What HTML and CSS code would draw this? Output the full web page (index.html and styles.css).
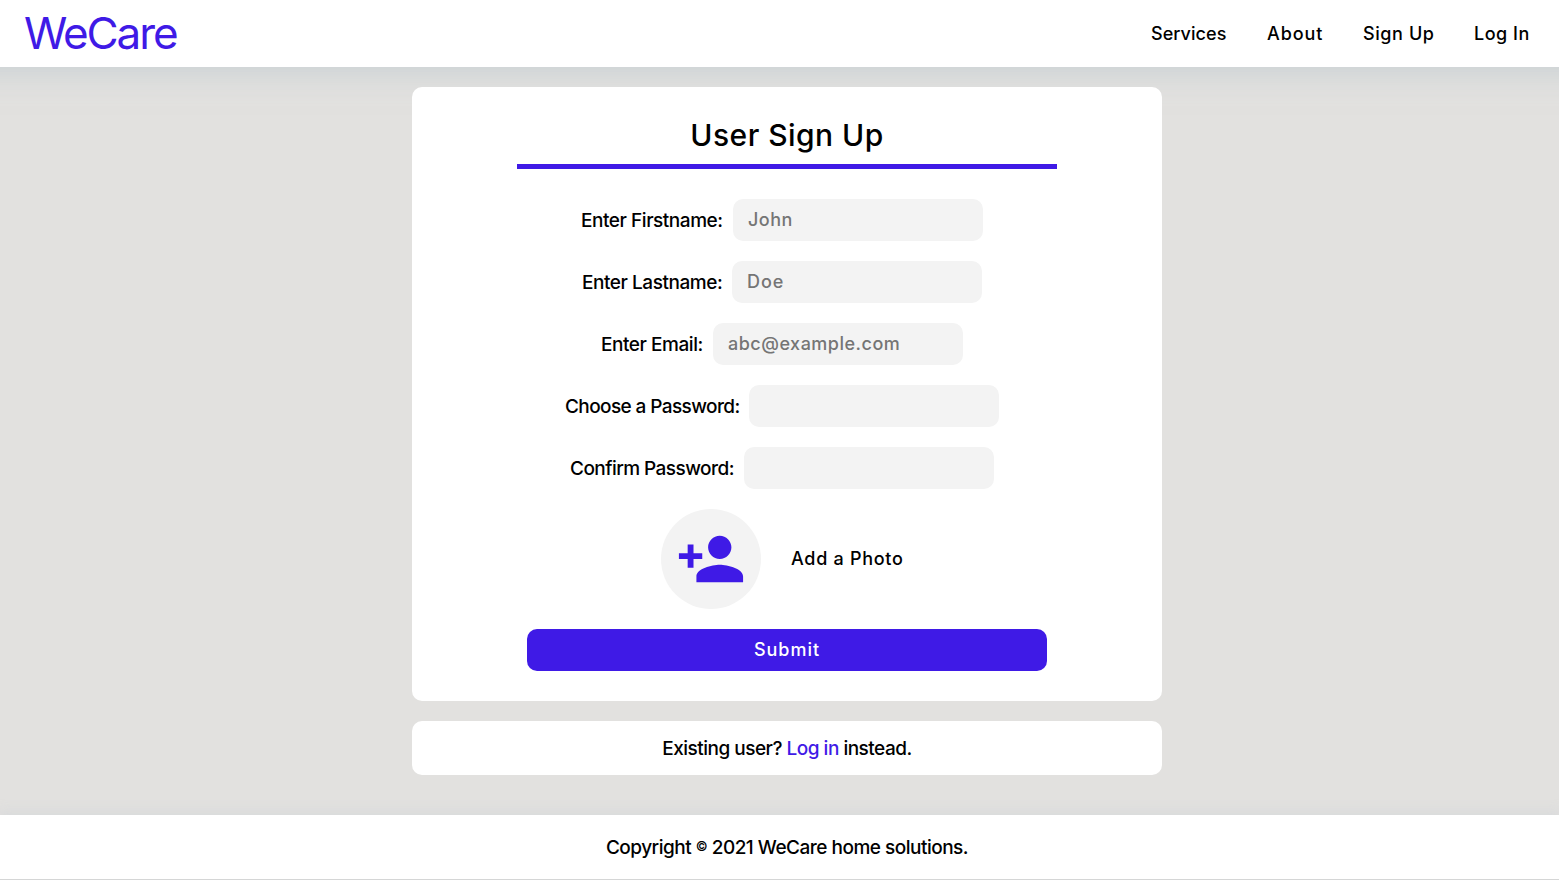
FILE: index.html
```html
<!DOCTYPE html>
<html lang="en">
<head>
<meta charset="utf-8">
<title>WeCare - Sign Up</title>
<link rel="stylesheet" href="styles.css">
</head>
<body>
<header class="header">
  <a class="logo">WeCare</a>
  <nav class="nav">
    <a class="nav-services">Services</a>
    <a class="nav-about">About</a>
    <a class="nav-signup">Sign Up</a>
    <a class="nav-login">Log In</a>
  </nav>
</header>
<main class="main">
  <form class="card">
    <h1 class="title"><span>User Sign Up</span></h1>
    <div class="row"><label class="label first" for="first">Enter Firstname:</label><input class="field" id="first" placeholder="John"></div>
    <div class="row"><label class="label last" for="last">Enter Lastname:</label><input class="field field-last" id="last" placeholder="Doe"></div>
    <div class="row"><label class="label email" for="email">Enter Email:</label><input class="field field-email" id="email" placeholder="abc@example.com"></div>
    <div class="row"><label class="label choose" for="pass">Choose a Password:</label><input class="field" id="pass" type="password"></div>
    <div class="row"><label class="label confirm" for="confirm">Confirm Password:</label><input class="field" id="confirm" type="password"></div>
    <div class="photo">
      <div class="avatar">
        <svg viewBox="0 0 24 24" width="70" height="70"><path d="M15 12c2.21 0 4-1.79 4-4s-1.79-4-4-4-4 1.79-4 4 1.79 4 4 4zm-9-2V7H4v3H1v2h3v3h2v-3h3v-2H6zm9 4c-2.67 0-8 1.34-8 4v2h16v-2c0-2.66-5.33-4-8-4z"/></svg>
      </div>
      <span class="photo-text">Add a Photo</span>
    </div>
    <button class="submit" type="button">Submit</button>
  </form>
  <section class="existing"><p class="existing-text">Existing user? <a class="link">Log in</a> instead.</p></section>
</main>
<footer class="footer"><p class="copyright">Copyright <span class="mark">©</span> 2021 WeCare home solutions.</p></footer>
</body>
</html>
```
FILE: styles.css
```css
* { box-sizing: border-box; margin: 0; padding: 0; }
body {
  height: 880px;
  overflow: hidden;
  display: flex;
  flex-direction: column;
  background: #e2e1df;
  color: #000;
  font-family: Inter, sans-serif;
  font-size: 18px;
  font-weight: 500;
}
.header {
  flex: none;
  height: 67px;
  display: flex;
  justify-content: space-between;
  align-items: center;
  padding: 0 29px 0 24px;
  background: #fff;
  box-shadow: 0 -37px 30px 40px rgba(175, 192, 200, 0.55);
}
.logo {
  color: #3f1ae6;
  font-size: 44px;
  font-weight: 400;
  line-height: 69px;
  letter-spacing: -2.1px;
  white-space: nowrap;
}
.nav { display: flex; gap: 40px; white-space: nowrap; }
.nav a { line-height: 67px; }
.nav-services { width: 76px; letter-spacing: 0.05px; }
.nav-about { width: 56px; letter-spacing: 0.9px; }
.nav-signup { width: 71px; letter-spacing: 0.6px; }
.nav-login { width: 56px; letter-spacing: 0.5px; }
.main {
  position: relative;
  flex: none;
  height: 748px;
  width: 750px;
  margin-left: 412px;
  padding-top: 20px;
  display: flex;
  flex-direction: column;
  gap: 20px;
}
.card {
  height: 614px;
  padding: 30px 105px;
  border-radius: 10px;
  background: #fff;
  display: flex;
  flex-direction: column;
  align-items: center;
}
.title {
  width: 540px;
  height: 52px;
  margin-bottom: 30px;
  border-bottom: 5px solid #3f1ae6;
  font-size: 30px;
  font-weight: 500;
  line-height: 37px;
  letter-spacing: 0.45px;
  text-align: center;
}
.row {
  height: 42px;
  margin-bottom: 20px;
  padding-right: 10px;
  display: flex;
  align-items: center;
  gap: 10px;
}
.label { white-space: nowrap; font-size: 19px; letter-spacing: -0.45px; }
.first { width: 142px; }
.last { width: 140px; }
.email { width: 102px; }
.choose { width: 174px; letter-spacing: -0.6px; }
.confirm { width: 164px; letter-spacing: -0.55px; }
.field {
  width: 250px;
  height: 42px;
  padding: 0 15px 2px;
  border: 0;
  border-radius: 10px;
  outline: 0;
  background: #f3f3f3;
  font: inherit;
  letter-spacing: 0.5px;
}
.field-last { letter-spacing: 0.9px; }
.field::placeholder { color: #757575; opacity: 1; }
.photo {
  width: 242px;
  height: 100px;
  margin-right: 10px;
  margin-bottom: 20px;
  display: flex;
  align-items: center;
  gap: 30px;
  white-space: nowrap;
}
.photo-text { padding-bottom: 2px; letter-spacing: 0.7px; }
.avatar {
  flex: none;
  width: 100px;
  height: 100px;
  border-radius: 50%;
  background: #f3f3f3;
  display: grid;
  place-items: center;
}
.avatar svg { display: block; fill: #3f1ae6; }
.submit {
  width: 520px;
  height: 42px;
  padding-bottom: 2px;
  border: 0;
  border-radius: 10px;
  background: #3f1ae6;
  color: #fff;
  font: inherit;
  letter-spacing: 1px;
}
.existing {
  height: 54px;
  border-radius: 10px;
  background: #fff;
  font-size: 19px;
  line-height: 56px;
  letter-spacing: -0.5px;
  text-align: center;
}
.link { color: #3f1ae6; }
.footer {
  height: 65px;
  border-bottom: 1px solid #d5d6d6;
  background: #fff;
  box-shadow: 0 0 12px 3px rgba(205, 209, 214, 0.45);
  font-size: 19px;
  line-height: 65px;
  letter-spacing: -0.5px;
}
.copyright { width: 750px; margin-left: 412px; text-align: center; }
.mark { font-size: 13px; line-height: 1; vertical-align: 3px; }
```
